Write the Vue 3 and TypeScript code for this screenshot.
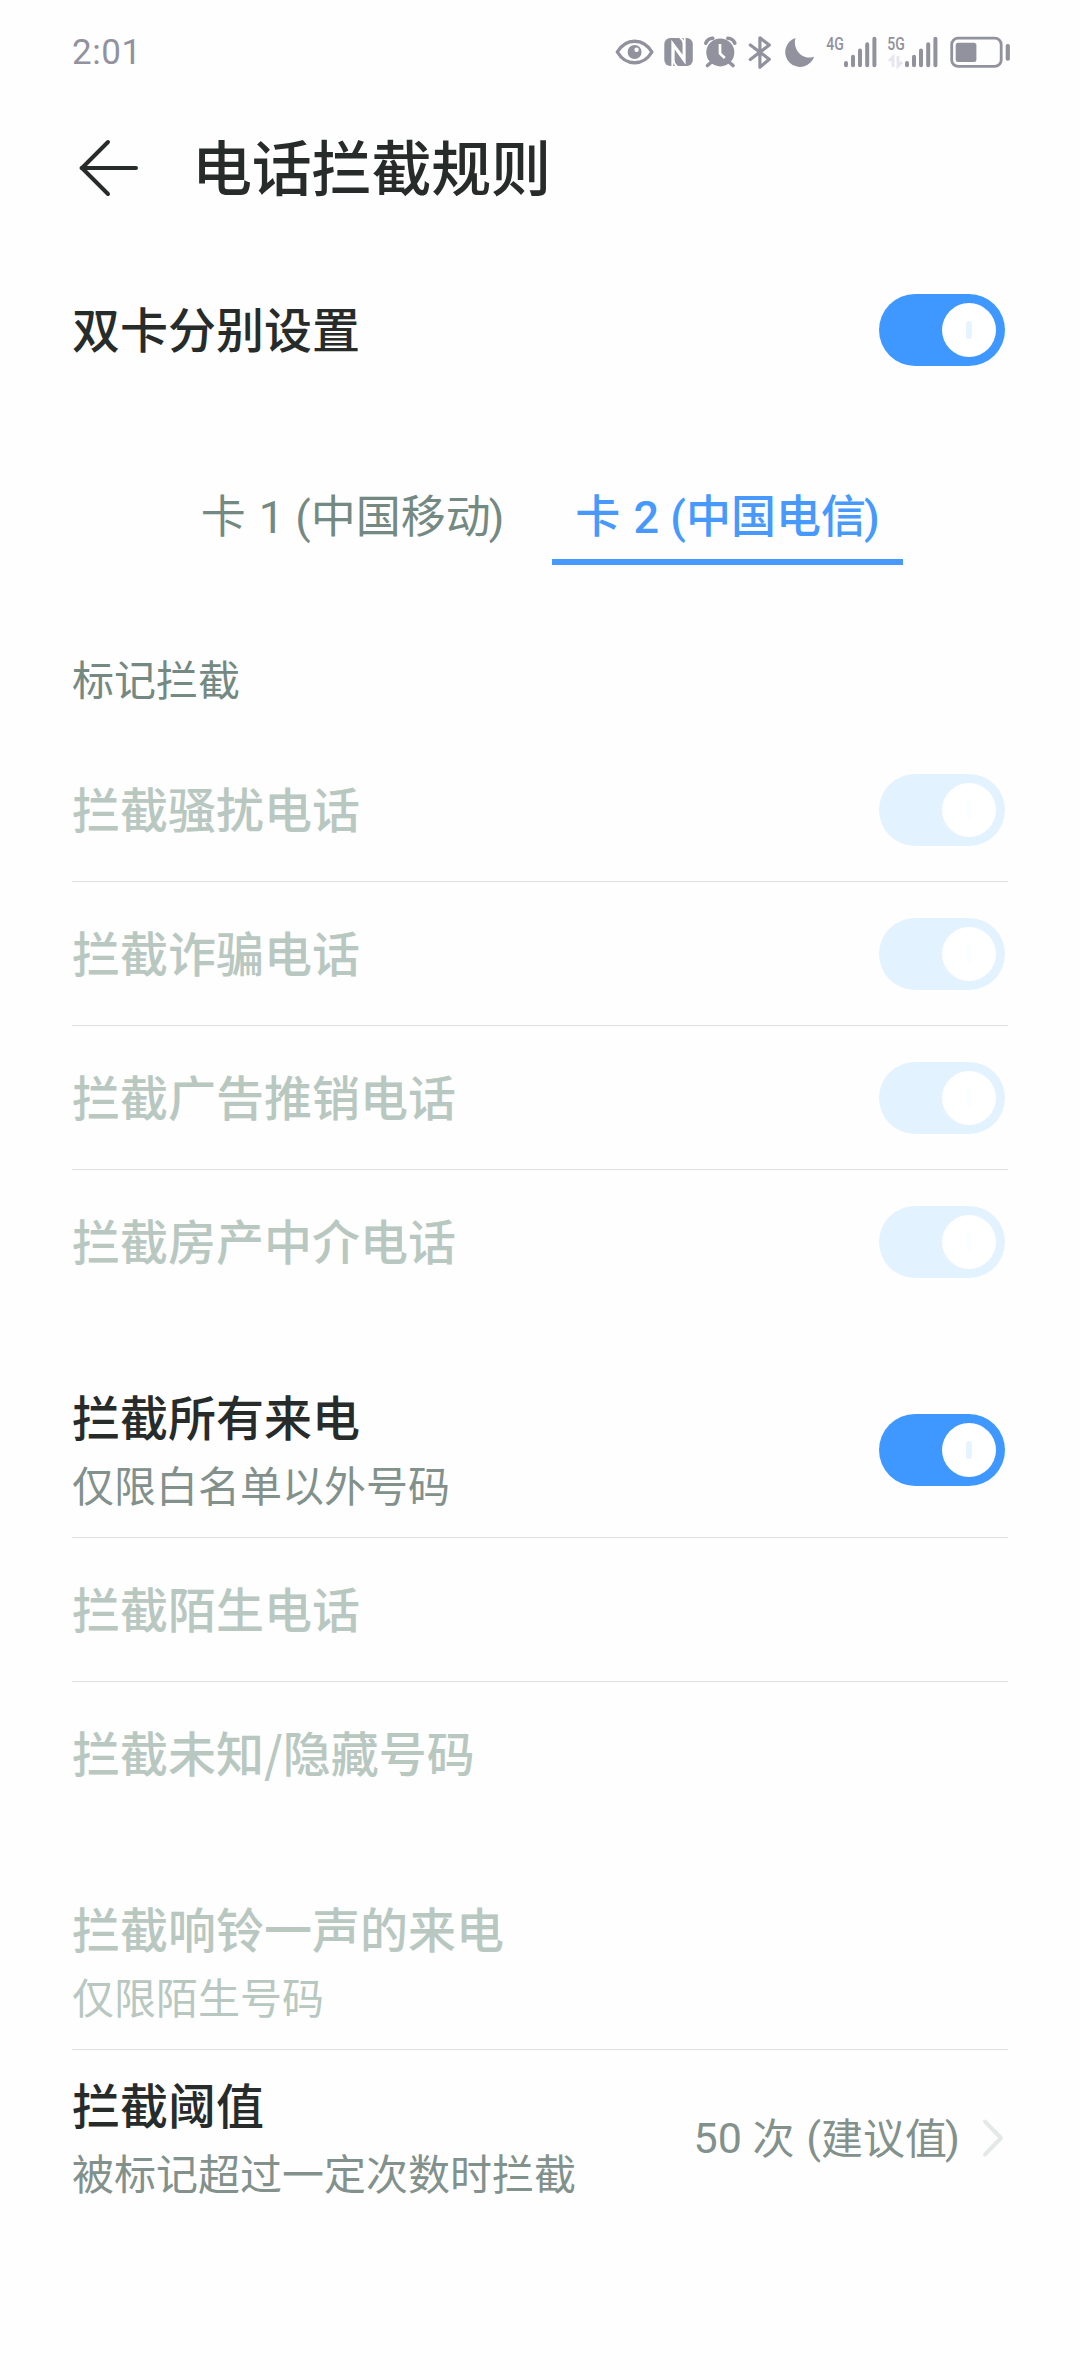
<script setup lang="ts">
import { reactive, ref } from 'vue'

interface Rule {
  title: string
  note?: string
  disabled?: boolean
  on?: boolean
  value?: Part[]
}
interface Part {
  text: string
  latin?: boolean
}

const dualCard = ref(true)
const activeTab = ref(1)

const tabs: Part[][] = [
  [{ text: '卡' }, { text: ' 1 (', latin: true }, { text: '中国移动' }, { text: ')', latin: true }],
  [{ text: '卡' }, { text: ' 2 (', latin: true }, { text: '中国电信' }, { text: ')', latin: true }],
]

const markRules = reactive<Rule[]>([
  { title: '拦截骚扰电话', disabled: true, on: true },
  { title: '拦截诈骗电话', disabled: true, on: true },
  { title: '拦截广告推销电话', disabled: true, on: true },
  { title: '拦截房产中介电话', disabled: true, on: true },
])
const callRules = reactive<Rule[]>([
  { title: '拦截所有来电', note: '仅限白名单以外号码', on: true },
  { title: '拦截陌生电话', disabled: true },
  { title: '拦截未知/隐藏号码', disabled: true },
])
const ringRules = reactive<Rule[]>([
  { title: '拦截响铃一声的来电', note: '仅限陌生号码', disabled: true },
  {
    title: '拦截阈值',
    note: '被标记超过一定次数时拦截',
    value: [
      { text: '50 ', latin: true },
      { text: '次' },
      { text: ' (', latin: true },
      { text: '建议值' },
      { text: ')', latin: true },
    ],
  },
])
const groups = [markRules, callRules, ringRules]

function toggle(rule: Rule) {
  if (!rule.disabled) rule.on = !rule.on
}
</script>

<template>
  <div class="screen">
    <div class="status">
      <span class="clock">2:01</span>
      <div class="tray">
        <svg class="eye" width="42" height="36" viewBox="0 0 42 36">
          <path d="M3.3 18C7.5 11 13.5 7.2 20.6 7.2S33.700 11 37.900 18C33.700 25 27.700 28.800 20.600 28.800S7.500 25 3.300 18Z" fill="none" stroke="currentColor" stroke-width="3.400" stroke-linejoin="round" />
          <circle cx="20.600" cy="18" r="7" fill="currentColor" />
          <circle cx="22.600" cy="15.800" r="2.200" fill="#fff" />
        </svg>
        <svg class="nfc" width="33" height="36" viewBox="0 0 33 36">
          <rect x="2.300" y="4" width="28.500" height="28" rx="6" fill="currentColor" />
          <path d="M10.300 32V8.500L21.500 23.500V9.500Q21.500 6.500 18 3.500M22.700 4V27.700L11.700 12.500V26.500Q11.700 29.500 15 32.500" fill="none" stroke="#fff" stroke-width="1.900" />
        </svg>
        <svg class="alarm" width="36" height="36" viewBox="0 0 36 36">
          <circle cx="17.300" cy="18.400" r="14" fill="currentColor" />
          <path d="M2.800 9.200Q4.500 4.600 9.800 4.300M24.800 4.300Q30 4.600 31.800 9.200M8.500 28L4.500 31.500M26 28L30 31.500" fill="none" stroke="currentColor" stroke-width="3.600" stroke-linecap="round" />
          <path d="M17 10V19.500L21.800 24" fill="none" stroke="#fff" stroke-width="2.700" />
        </svg>
        <svg class="bluetooth" width="26" height="36" viewBox="0 0 26 36">
          <path d="M3.300 11L22.300 25.300L12.900 33.200V3.800L22.300 11L3.300 25.600" fill="none" stroke="currentColor" stroke-width="3.200" stroke-linecap="round" stroke-linejoin="round" />
        </svg>
        <svg class="moon" width="34" height="36" viewBox="0 0 34 36">
          <path d="M12.500 4A14.800 14.800 0 1 0 31.200 22.400C28 24.300 21.500 24 17.200 20.200C12 15.600 11 9.500 12.500 4Z" fill="currentColor" />
        </svg>
        <svg v-for="net in ['4G', '5G']" :key="net" class="signal" width="55" height="36" viewBox="0 0 55 36">
          <text x="2.300" y="16.400" textLength="17.500" lengthAdjust="spacingAndGlyphs">{{ net }}</text>
          <path v-if="net === '5G'" d="M4 27L8 23V33M13 22V32L17 28" fill="none" stroke="#e6e6f1" stroke-width="3" />
          <path d="M22 29V31.300M29 22.700V31.300M36 16.500V31.300M43.200 10.200V31.300M50.400 4.700V31.300" stroke="currentColor" stroke-width="4" stroke-linecap="round" />
        </svg>
        <svg class="battery" width="64" height="36" viewBox="0 0 64 36">
          <rect x="3.700" y="4.200" width="49.500" height="28.200" rx="6.500" fill="none" stroke="currentColor" stroke-width="2.800" />
          <rect x="7.700" y="8.700" width="20.700" height="19.300" rx="2.500" fill="currentColor" />
          <rect x="57.700" y="10" width="4.200" height="16.700" rx="1.800" fill="currentColor" />
        </svg>
      </div>
    </div>

    <header class="bar">
      <svg class="back" width="60" height="60" viewBox="0 0 60 60">
        <path d="M58 30H3.500M30 4L4 30L30 56" fill="none" stroke="currentColor" stroke-width="4" stroke-linecap="round" stroke-linejoin="round" />
      </svg>
      <h1>电话拦截规则</h1>
    </header>

    <div class="row dual">
      <span class="title">双卡分别设置</span>
      <button class="switch" :class="{ on: dualCard }" @click="dualCard = !dualCard"><i></i></button>
    </div>

    <nav class="tabs">
      <button v-for="(tab, i) in tabs" :key="i" class="tab" :class="{ active: i === activeTab }" @click="activeTab = i">
        <span v-for="(part, j) in tab" :key="j" :class="{ latin: part.latin }">{{ part.text }}</span>
      </button>
    </nav>

    <h2>标记拦截</h2>

    <section v-for="(group, g) in groups" :key="g" class="group">
      <div
        v-for="rule in group"
        :key="rule.title"
        class="row"
        :class="{ tall: rule.note, disabled: rule.disabled }"
        @click="toggle(rule)"
      >
        <div class="text">
          <span class="title">{{ rule.title }}</span>
          <span v-if="rule.note" class="note">{{ rule.note }}</span>
        </div>
        <button v-if="rule.on !== undefined" class="switch" :class="{ on: rule.on }"><i></i></button>
        <div v-if="rule.value" class="value">
          <span v-for="(part, j) in rule.value" :key="j" :class="part.latin ? 'latin' : 'han'">{{ part.text }}</span>
          <svg class="chevron" width="24" height="42" viewBox="0 0 24 42">
            <path d="M4 4.500L20 21L4 37.500" fill="none" stroke="#e4e9e7" stroke-width="4" stroke-linecap="round" stroke-linejoin="round" />
          </svg>
        </div>
      </div>
    </section>
  </div>
</template>

<style>
body {
  background: #fefefe;
}
</style>

<style scoped>
.screen {
  box-sizing: border-box;
  width: 1080px;
  height: 2370px;
  overflow: hidden;
  background: #fefefe;
  color: #272b2a;
  font-family: 'Noto Sans CJK SC', sans-serif;
}
button {
  padding: 0;
  border: 0;
  background: none;
  font: inherit;
  color: inherit;
}
.latin {
  font-family: Roboto, 'Noto Sans CJK SC', sans-serif;
  white-space: pre;
}
.status {
  display: flex;
  justify-content: space-between;
  align-items: center;
  height: 104px;
  padding: 0 68px 0 72px;
  color: #92929f;
}
.clock {
  padding-top: 2px;
  font: 35px/40px Roboto, sans-serif;
  letter-spacing: 0.6px;
}
.tray {
  display: flex;
}
.nfc {
  margin-left: 6px;
}
.alarm {
  margin-left: 8px;
}
.bluetooth {
  margin-left: 8px;
}
.moon {
  margin-left: 10px;
}
.signal {
  margin-left: 7px;
}
.signal + .signal {
  margin-left: 6px;
}
.battery {
  margin-left: 8px;
}
.signal text {
  font: 500 18.500px Roboto, sans-serif;
  fill: currentColor;
}
.bar {
  display: flex;
  align-items: center;
  height: 128px;
  padding-left: 78px;
}
h1 {
  margin: 0 0 0 54px;
  padding-bottom: 6px;
  font-size: 60px;
  line-height: 88px;
  font-weight: 500;
  letter-spacing: -0.2px;
}
.row {
  box-sizing: border-box;
  display: flex;
  align-items: center;
  justify-content: space-between;
  height: 144px;
  margin: 0 72px;
  padding-right: 3px;
}
.row.dual {
  margin-top: 26px;
}
.row.tall {
  height: 176px;
}
.group {
  margin-bottom: 48px;
}
.group .row:not(:last-child) {
  border-bottom: 1px solid #dfe2e1;
}
.text {
  display: flex;
  flex-direction: column;
}
.title {
  padding-bottom: 6px;
  font-size: 48px;
  line-height: 64px;
  font-weight: 500;
}
.tall .title {
  padding-bottom: 4px;
}
.note {
  font-size: 42px;
  line-height: 66px;
  color: #82918b;
}
.disabled .title,
.disabled .note {
  color: #b8c8c0;
}
.switch {
  display: flex;
  align-items: center;
  box-sizing: border-box;
  width: 126px;
  height: 72px;
  padding: 9px;
  border-radius: 36px;
  background: #d9dede;
}
.switch i {
  display: flex;
  width: 54px;
  height: 54px;
  border-radius: 50%;
  background: #fff;
}
.switch.on {
  justify-content: flex-end;
  background: #3f98ff;
}
.switch.on i::after {
  content: '';
  width: 6px;
  height: 18px;
  margin: auto;
  border-radius: 3px;
  background: #e6f4ff;
}
.disabled .switch.on {
  background: #e2f3ff;
}
.disabled .switch.on i::after {
  background: #fbfeff;
}
.tabs {
  display: flex;
  justify-content: center;
  gap: 24px;
  margin-top: 63px;
}
.tab {
  box-sizing: border-box;
  display: flex;
  justify-content: center;
  align-items: baseline;
  width: 351px;
  height: 100px;
  border-bottom: 6px solid transparent;
  font-size: 45px;
  line-height: 97px;
  color: #748981;
}
.tab .latin:nth-child(2) {
  margin-left: 2px;
}
.tab .latin:last-child {
  margin-left: -2px;
}
.tab.active {
  border-color: #4799fe;
  color: #4799fe;
  font-weight: 500;
}
h2 {
  margin: 80px 72px 27px;
  font-size: 42px;
  line-height: 66px;
  font-weight: 400;
  color: #748981;
}
.value {
  display: flex;
  align-items: center;
  font-size: 42px;
  color: #82918b;
}
.value .han {
  padding-bottom: 5px;
}
.value .latin {
  font-size: 43px;
}
.value .latin:nth-child(3) {
  margin-left: 1px;
}
.value .latin:nth-child(5) {
  margin-left: -2px;
}
.chevron {
  margin-left: 21px;
}
</style>
